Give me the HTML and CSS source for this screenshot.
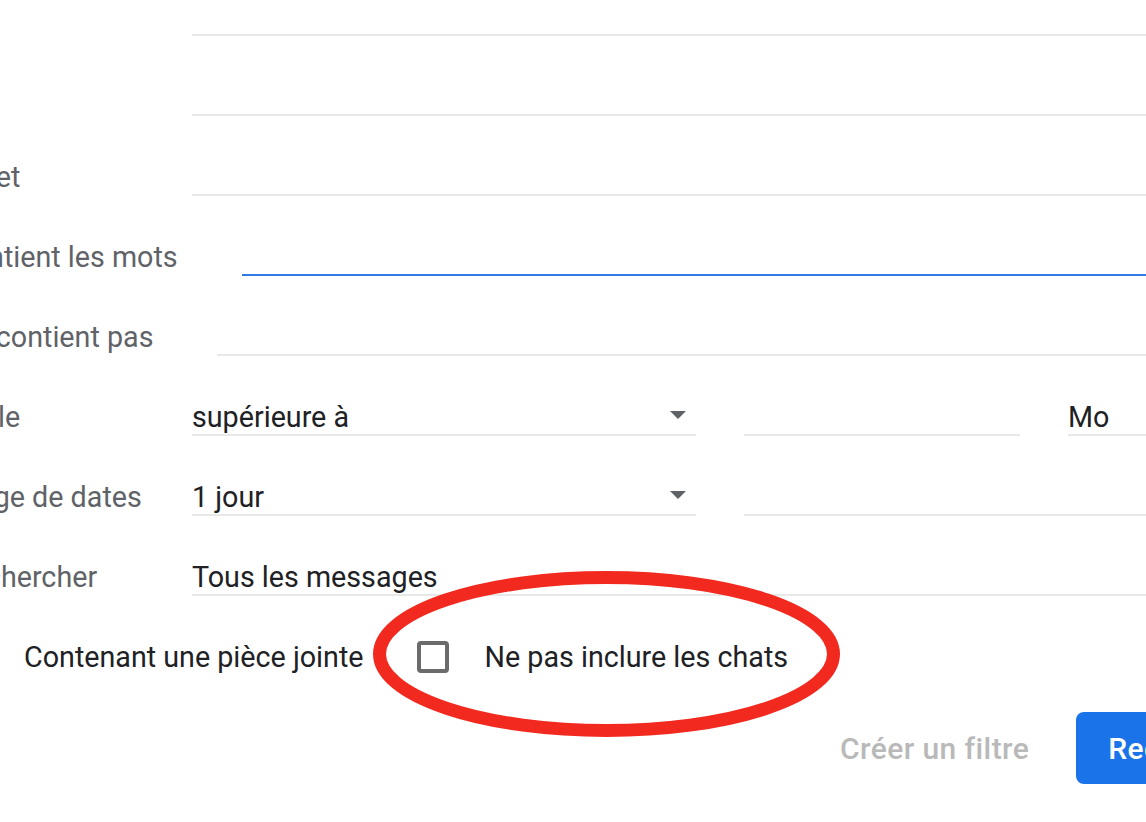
FILE: index.html
```html
<!DOCTYPE html>
<html lang="fr">
<head>
    <meta charset="UTF-8">
    <meta name="viewport" content="width=device-width, initial-scale=1.0">
    <title>Recherche avancée</title>
    <link rel="stylesheet" href="styles.css">
</head>
<body>

    <div class="page">
        <form class="search-form">
            <div class="row">
                <label class="label">De</label>
                <div class="field"></div>
            </div>
            <div class="row">
                <label class="label">À</label>
                <div class="field"></div>
            </div>
            <div class="row">
                <label class="label">Objet</label>
                <div class="field"></div>
            </div>
            <div class="row">
                <label class="label">Contient les mots</label>
                <div class="field focused"></div>
            </div>
            <div class="row">
                <label class="label">Ne contient pas</label>
                <div class="field"></div>
            </div>
            <div class="row fixed">
                <label class="label">Taille</label>
                <div class="field select size-select">
                    <span>supérieure à</span>
                    <span class="arrow"></span>
                </div>
                <div class="field size-input"></div>
                <div class="field select">
                    <span>Mo</span>
                    <span class="arrow"></span>
                </div>
            </div>
            <div class="row fixed">
                <label class="label">Plage de dates</label>
                <div class="field select size-select">
                    <span>1 jour</span>
                    <span class="arrow"></span>
                </div>
                <div class="field"></div>
            </div>
            <div class="row fixed">
                <label class="label">Rechercher</label>
                <div class="field select">
                    <span>Tous les messages</span>
                    <span class="arrow"></span>
                </div>
            </div>

            <div class="checks">
                <label class="check">
                    <span class="box"></span>
                    <span>Contenant une pièce jointe</span>
                </label>
                <label class="check">
                    <span class="box"></span>
                    <span>Ne pas inclure les chats</span>
                </label>
            </div>

            <div class="actions">
                <button type="button" class="btn text">Créer un filtre</button>
                <button type="button" class="btn primary">Rechercher</button>
            </div>
        </form>

        <!-- red annotation circled round the chats option -->
        <svg class="circle" width="467" height="166" viewBox="0 0 467 166">
            <ellipse cx="233.5" cy="83" rx="227" ry="76.5" fill="none" stroke="#f2291f" stroke-width="13"/>
        </svg>
    </div>

</body>
</html>
```

FILE: styles.css
```css
body {
    margin: 0;
    background: #fff;
    font-family: Roboto, "Liberation Sans", Arial, sans-serif;
    overflow: hidden;
}
.page {
    position: relative;
    width: 1146px;
    height: 822px;
    overflow: hidden;
}
.search-form {
    width: 1335px;
    margin-left: -47px;
    margin-top: -44px;
    font-size: 28.7px;
    color: #202124;
}
.row {
    display: flex;
    align-items: flex-end;
    height: 80px;
}
.label {
    flex: none;
    min-width: 175px;
    margin-right: 64px;
    height: 34px;
    padding-top: 8px;
    line-height: 34px;
    border-bottom: 2px solid transparent;
    color: #5f6368;
    white-space: nowrap;
}
/* rows with selects keep a fixed label column */
.row.fixed .label {
    width: 175px;
    min-width: 0;
}
.field {
    flex: 1;
    height: 34px;
    padding-top: 8px;
    line-height: 34px;
    border-bottom: 2px solid #e8e8e8;
    white-space: nowrap;
}
.field.focused {
    border-bottom-color: #2f7ae5;
}
.select {
    display: flex;
    align-items: center;
    justify-content: space-between;
}
.size-select {
    flex: none;
    width: 504px;
    margin-right: 48px;
}
.size-input {
    flex: none;
    width: 276px;
    margin-right: 48px;
}
.arrow {
    width: 0;
    height: 0;
    border-left: 8px solid transparent;
    border-right: 8px solid transparent;
    border-top: 8px solid #5f6368;
    margin-right: 10px;
    margin-bottom: 4px;
}
.row:last-of-type .arrow {
    display: none;
}
/* checkboxes */
.checks {
    display: flex;
    align-items: center;
    height: 80px;
    margin-top: 21px;
    margin-left: 3px;
}
.check {
    display: flex;
    align-items: center;
    gap: 36px;
    margin-right: 53px;
}
.box {
    width: 24px;
    height: 24px;
    border: 4px solid #6b6b6b;
    border-radius: 4px;
}
/* buttons */
.actions {
    display: flex;
    gap: 15px;
    margin-top: 15px;
    padding-left: 855px;
}
.btn {
    height: 72px;
    padding: 0 32px;
    border: none;
    border-radius: 8px;
    font-family: Roboto, "Liberation Sans", Arial, sans-serif;
    font-size: 30px;
    font-weight: 500;
    letter-spacing: 0.4px;
    background: none;
    white-space: nowrap;
    cursor: pointer;
}
.btn.text {
    color: #b9b9b9;
}
.btn.primary {
    background: #1a73e8;
    color: #fff;
}
.circle {
    position: absolute;
    left: 373px;
    top: 571px;
}
```
